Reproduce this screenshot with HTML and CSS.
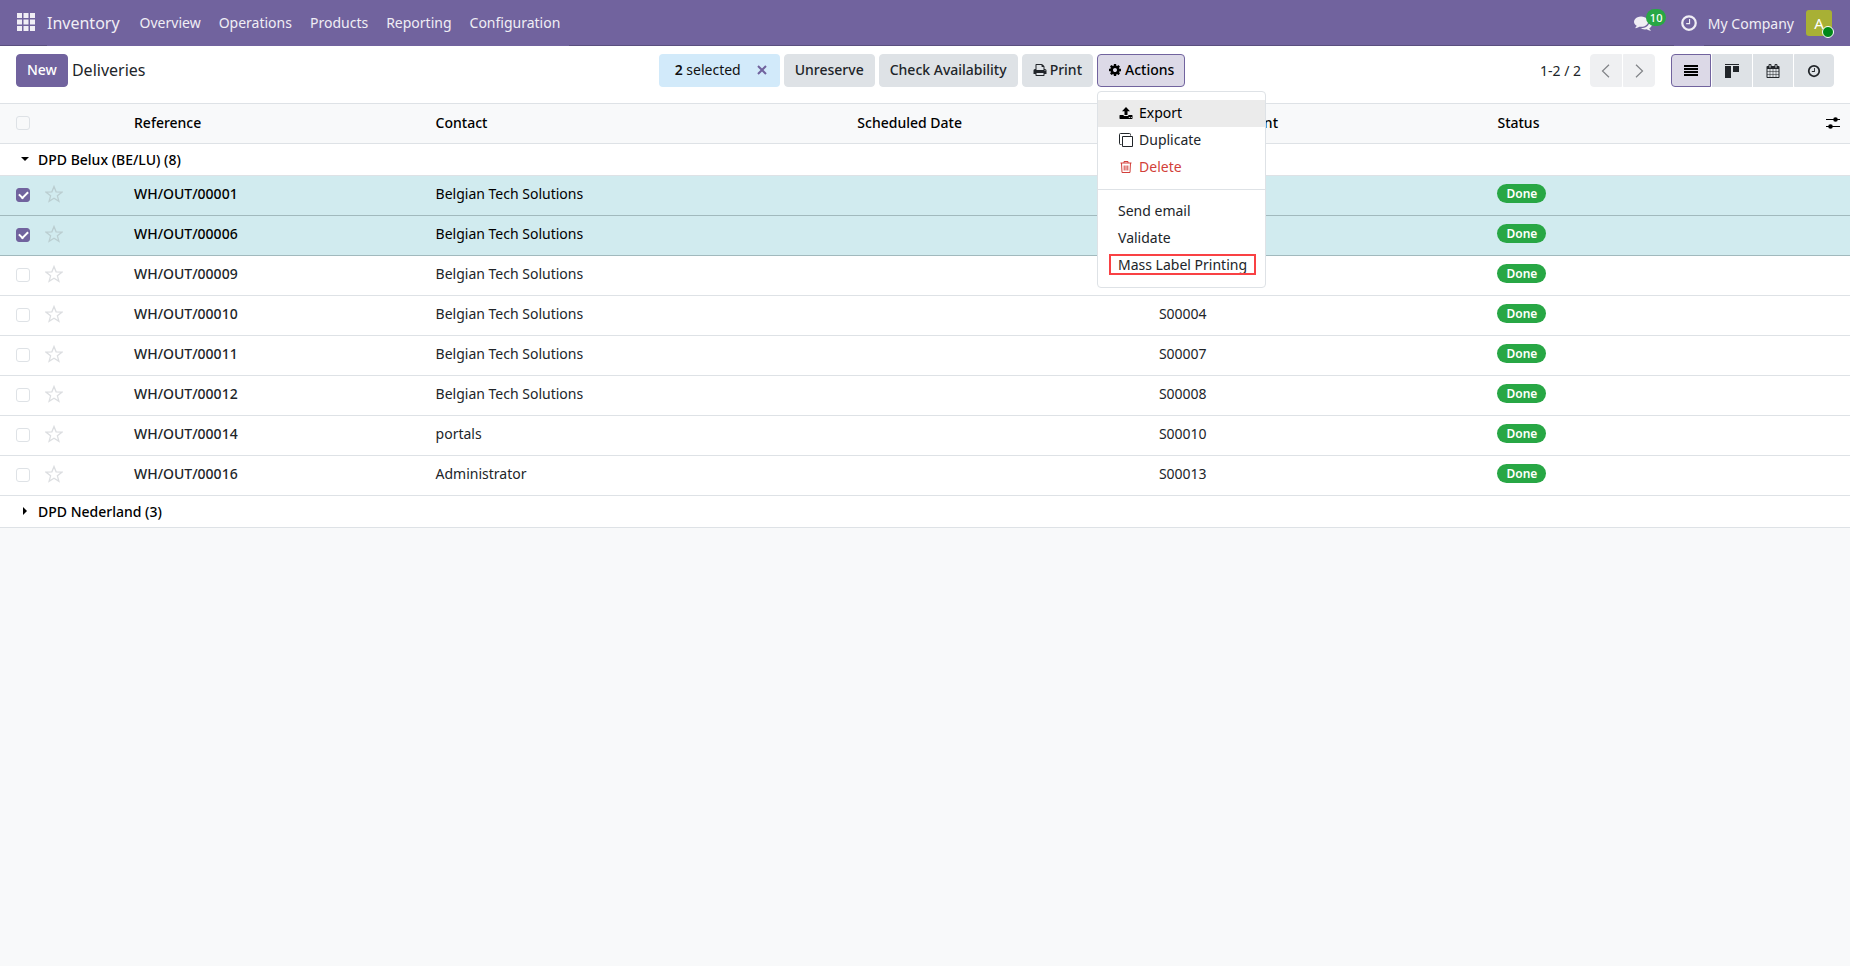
FILE: index.html
```html
<!DOCTYPE html>
<html lang="en">
<head>
<meta charset="utf-8">
<title>Deliveries - Inventory</title>
<link rel="stylesheet" href="styles.css">
</head>
<body>
<svg class="sprite" aria-hidden="true">
  <symbol id="apps" viewBox="0 0 18 18"><path d="M0 0h5v5H0zM6.500 0h5v5h-5zM13 0h5v5h-5zM0 6.500h5v5H0zM6.500 6.500h5v5h-5zM13 6.500h5v5h-5zM0 13h5v5H0zM6.500 13h5v5h-5zM13 13h5v5h-5z"/></symbol>
  <symbol id="comments" viewBox="0 0 1792 1792"><path d="M1408 768q0 139-94 257t-256.500 186.500-353.500 68.500q-86 0-176-16-124 88-278 128-36 9-86 16h-3q-11 0-20.500-8t-11.500-21q-1-3-1-6.500t.5-6.500 2-6l2.500-5 3.500-5.500 4-5 4.500-5 4-4.500q5-6 23-25t26-29.500 22.500-29 25-38.500 20.500-44q-124-72-195-177t-71-224q0-139 94-257t256.500-186.500 353.500-68.500 353.500 68.500 256.500 186.500 94 257zm384 256q0 120-71 224.500t-195 176.500q10 24 20.500 44t25 38.500 22.500 29 26 29.500 23 25q1 1 4 4.500t4.500 5 4 5 3.500 5.500l2.500 5 2 6 .5 6.500-1 6.500q-3 14-13 22t-22 7q-50-7-86-16-154-40-278-128-90 16-176 16-271 0-472-132 58 4 88 4 161 0 309-45t264-129q125-92 192-212t67-254q0-77-23-152 129 71 204 178t75 230z"/></symbol>
  <symbol id="clock" viewBox="0 0 16 16"><path d="M8 1a7 7 0 1 0 0 14A7 7 0 0 0 8 1zm0 2a5 5 0 1 1 0 10A5 5 0 0 1 8 3z"/><path d="M8 4.500h1V9H5.500V8H8z"/></symbol>
  <symbol id="cog" viewBox="0 0 1792 1792"><path d="M1152 896q0-106-75-181t-181-75-181 75-75 181 75 181 181 75 181-75 75-181zm512-109v222q0 12-8 23t-20 13l-185 28q-19 54-39 91 35 50 107 138 10 12 10 25t-9 23q-27 37-99 108t-94 71q-12 0-26-9l-138-108q-44 23-91 38-16 136-29 186-7 28-36 28h-222q-14 0-24.500-8.500t-11.500-21.500l-28-184q-49-16-90-37l-141 107q-10 9-25 9-14 0-25-11-126-114-165-168-7-10-7-23 0-12 8-23 15-21 51-66.500t54-70.500q-27-50-41-99l-183-27q-13-2-21-12.500t-8-23.500v-222q0-12 8-23t19-13l186-28q14-46 39-92-40-57-107-138-10-12-10-24 0-10 9-23 26-36 98.500-107.500t94.500-71.500q13 0 26 10l138 107q44-23 91-38 16-136 29-186 7-28 36-28h222q14 0 24.500 8.500t11.500 21.500l28 184q49 16 90 37l142-107q9-9 24-9 13 0 25 10 129 119 165 170 7 8 7 22 0 12-8 23-15 21-51 66.500t-54 70.500q26 50 41 98l183 28q13 2 21 12.500t8 23.500z"/></symbol>
  <symbol id="print" viewBox="0 0 1792 1792"><path d="M448 1536h896v-256h-896v256zm0-640h896v-384h-160q-40 0-68-28t-28-68v-160h-640v640zm1152 64q0-26-19-45t-45-19-45 19-19 45 19 45 45 19 45-19 19-45zm128 0v416q0 13-9.500 22.500t-22.500 9.500h-224v160q0 40-28 68t-68 28h-960q-40 0-68-28t-28-68v-160h-224q-13 0-22.500-9.500t-9.500-22.500v-416q0-79 56.500-135.500t135.500-56.500h64v-544q0-40 28-68t68-28h672q40 0 88 20t76 48l152 152q28 28 48 76t20 88v256h64q79 0 135.500 56.500t56.500 135.500z"/></symbol>
  <symbol id="calendar" viewBox="0 0 1792 1792"><path d="M192 1664h288v-288h-288v288zm352 0h320v-288h-320v288zm-352-352h288v-320h-288v320zm352 0h320v-320h-320v320zm-352-384h288v-288h-288v288zm736 736h320v-288h-320v288zm-384-736h320v-288h-320v288zm768 736h288v-288h-288v288zm-384-352h320v-320h-320v320zm-352-864v-288q0-13-9.500-22.500t-22.500-9.500h-64q-13 0-22.500 9.500t-9.500 22.500v288q0 13 9.500 22.500t22.500 9.500h64q13 0 22.500-9.500t9.500-22.500zm736 864h288v-320h-288v320zm-384-384h320v-288h-320v288zm384 0h288v-288h-288v288zm32-480v-288q0-13-9.500-22.500t-22.500-9.500h-64q-13 0-22.500 9.500t-9.500 22.500v288q0 13 9.500 22.500t22.500 9.500h64q13 0 22.500-9.500t9.500-22.500zm384-64v1280q0 52-38 90t-90 38h-1408q-52 0-90-38t-38-90v-1280q0-52 38-90t90-38h128v-96q0-66 47-113t113-47h64q66 0 113 47t47 113v96h384v-96q0-66 47-113t113-47h64q66 0 113 47t47 113v96h128q52 0 90 38t38 90z"/></symbol>
  <symbol id="list" viewBox="0 0 14 14"><path d="M0 1h14v2H0zM0 4h14v2H0zM0 7h14v2H0zM0 10h14v2H0z"/></symbol>
  <symbol id="kanban" viewBox="0 0 14 14"><path d="M0 0h14v1H0zM0 2h6v12H0zM8 2h6v6H8z"/></symbol>
  <symbol id="left" viewBox="0 0 14 14"><path d="M10 .8 3.500 7l6.500 6.200" fill="none" stroke="currentColor" stroke-width="1.200"/></symbol>
  <symbol id="right" viewBox="0 0 14 14"><path d="M4 .8 10.500 7 4 13.200" fill="none" stroke="currentColor" stroke-width="1.200"/></symbol>
  <symbol id="close" viewBox="0 0 10 10"><path d="m1 1 8 8M9 1 1 9" fill="none" stroke="currentColor" stroke-width="2"/></symbol>
  <symbol id="upload" viewBox="0 0 14 14"><path d="M7 1l4 4.200H8.500V9h-3V5.200H3zM1 9h3.700v1h4.600V9H13q.5 0 .5.5V12q0 1-.5 1H1q-.5 0-.5-1V9.500Q.5 9 1 9zm8.800 2v1h1v-1zm2 0v1h1v-1z"/></symbol>
  <symbol id="copy" viewBox="0 0 14 14"><path d="M3.500 3.500h10v10h-10zM2.500 11.500h-1a1 1 0 0 1-1-1v-9a1 1 0 0 1 1-1h9a1 1 0 0 1 1 1v1" fill="none" stroke="currentColor"/></symbol>
  <symbol id="trash" viewBox="0 0 14 14"><path d="M1.500 3h11M5 3V1.500h4V3M2.500 3l.5 9.500h8l.5-9.500M5.200 5.500v5M7 5.500v5M8.800 5.500v5" fill="none" stroke="currentColor"/></symbol>
  <symbol id="sliders" viewBox="0 0 14 14"><path d="M0 3h14v1H0zM0 10h14v1H0z"/><circle cx="9.500" cy="3.500" r="2.300"/><circle cx="4.500" cy="10.500" r="2.300"/></symbol>
  <symbol id="star" viewBox="0 0 18 18"><path d="m9 1.500 2.100 5.300 5.800.4-4.500 3.600 1.500 5.600L9 13.300l-4.900 3.100 1.500-5.600L1.100 7.200l5.800-.4z" fill="none" stroke="currentColor" stroke-width="1.300"/></symbol>
  <symbol id="down" viewBox="0 0 8 8"><path d="M0 2h8L4 6z"/></symbol>
  <symbol id="next" viewBox="0 0 8 8"><path d="M2 0v8l4-4z"/></symbol>
</svg>

<header class="navbar">
  <button class="apps" aria-label="Home menu"><svg class="i18"><use href="#apps"/></svg></button>
  <nav class="menu">
    <a class="brand" href="#">Inventory</a>
    <a href="#">Overview</a>
    <a href="#">Operations</a>
    <a href="#">Products</a>
    <a href="#">Reporting</a>
    <a href="#">Configuration</a>
  </nav>
  <div class="systray">
    <button class="chat" aria-label="Messages"><svg class="i18"><use href="#comments"/></svg><span class="count">10</span></button>
    <button class="activities" aria-label="Activities"><svg class="i18"><use href="#clock"/></svg></button>
    <button class="company">My Company</button>
    <button class="user" aria-label="User menu"><span class="avatar">A<span class="online"></span></span></button>
  </div>
</header>

<section class="panel">
  <div class="panel-left">
    <button class="btn primary">New</button>
    <h1 class="title">Deliveries</h1>
  </div>
  <div class="panel-actions">
    <div class="selection"><span><b>2</b> selected</span><button class="unselect" aria-label="Clear selection"><svg class="i10"><use href="#close"/></svg></button></div>
    <button class="btn">Unreserve</button>
    <button class="btn">Check Availability</button>
    <button class="btn"><svg class="i14"><use href="#print"/></svg>Print</button>
    <div class="dropdown">
      <button class="btn active" aria-expanded="true"><svg class="i14"><use href="#cog"/></svg>Actions</button>
      <div class="dropdown-menu">
        <button class="item hover"><svg class="i14"><use href="#upload"/></svg>Export</button>
        <button class="item"><svg class="i14"><use href="#copy"/></svg>Duplicate</button>
        <button class="item danger"><svg class="i14"><use href="#trash"/></svg>Delete</button>
        <hr class="divider">
        <button class="item">Send email</button>
        <button class="item">Validate</button>
        <button class="item"><span class="marked">Mass Label Printing</span></button>
      </div>
    </div>
  </div>
  <div class="panel-right">
    <span class="range">1-2 / 2</span>
    <div class="group pager">
      <button class="btn" aria-label="Previous" disabled><svg class="i14"><use href="#left"/></svg></button>
      <button class="btn" aria-label="Next" disabled><svg class="i14"><use href="#right"/></svg></button>
    </div>
    <div class="group views">
      <button class="btn active" aria-label="List"><svg class="i14"><use href="#list"/></svg></button>
      <button class="btn" aria-label="Kanban"><svg class="i14"><use href="#kanban"/></svg></button>
      <button class="btn" aria-label="Calendar"><svg class="i14"><use href="#calendar"/></svg></button>
      <button class="btn" aria-label="Activity"><svg class="i14"><use href="#clock"/></svg></button>
    </div>
  </div>
</section>

<main>
<table class="list">
  <colgroup><col class="c-check"><col class="c-star"><col class="c-ref"><col class="c-contact"><col class="c-date"><col class="c-source"><col class="c-status"><col class="c-opts"></colgroup>
  <thead>
    <tr><th class="check"><input type="checkbox" aria-label="Select all"></th><th></th><th>Reference</th><th>Contact</th><th>Scheduled Date</th><th>Source Document</th><th>Status</th><th class="opts"><button class="plain" aria-label="Optional columns"><svg class="i14"><use href="#sliders"/></svg></button></th></tr>
  </thead>
  <tbody>
    <tr class="grp"><th colspan="8"><button class="plain"><svg class="i8"><use href="#down"/></svg>DPD Belux (BE/LU) (8)</button></th></tr>
    <tr class="selected"><td class="check"><input type="checkbox" aria-label="WH/OUT/00001" checked></td><td><button class="plain star" aria-label="Priority"><svg class="i18"><use href="#star"/></svg></button></td><td class="ref">WH/OUT/00001</td><td>Belgian Tech Solutions</td><td></td><td></td><td><span class="badge">Done</span></td><td></td></tr>
    <tr class="selected"><td class="check"><input type="checkbox" aria-label="WH/OUT/00006" checked></td><td><button class="plain star" aria-label="Priority"><svg class="i18"><use href="#star"/></svg></button></td><td class="ref">WH/OUT/00006</td><td>Belgian Tech Solutions</td><td></td><td></td><td><span class="badge">Done</span></td><td></td></tr>
    <tr><td class="check"><input type="checkbox" aria-label="WH/OUT/00009"></td><td><button class="plain star" aria-label="Priority"><svg class="i18"><use href="#star"/></svg></button></td><td class="ref">WH/OUT/00009</td><td>Belgian Tech Solutions</td><td></td><td></td><td><span class="badge">Done</span></td><td></td></tr>
    <tr><td class="check"><input type="checkbox" aria-label="WH/OUT/00010"></td><td><button class="plain star" aria-label="Priority"><svg class="i18"><use href="#star"/></svg></button></td><td class="ref">WH/OUT/00010</td><td>Belgian Tech Solutions</td><td></td><td>S00004</td><td><span class="badge">Done</span></td><td></td></tr>
    <tr><td class="check"><input type="checkbox" aria-label="WH/OUT/00011"></td><td><button class="plain star" aria-label="Priority"><svg class="i18"><use href="#star"/></svg></button></td><td class="ref">WH/OUT/00011</td><td>Belgian Tech Solutions</td><td></td><td>S00007</td><td><span class="badge">Done</span></td><td></td></tr>
    <tr><td class="check"><input type="checkbox" aria-label="WH/OUT/00012"></td><td><button class="plain star" aria-label="Priority"><svg class="i18"><use href="#star"/></svg></button></td><td class="ref">WH/OUT/00012</td><td>Belgian Tech Solutions</td><td></td><td>S00008</td><td><span class="badge">Done</span></td><td></td></tr>
    <tr><td class="check"><input type="checkbox" aria-label="WH/OUT/00014"></td><td><button class="plain star" aria-label="Priority"><svg class="i18"><use href="#star"/></svg></button></td><td class="ref">WH/OUT/00014</td><td>portals</td><td></td><td>S00010</td><td><span class="badge">Done</span></td><td></td></tr>
    <tr><td class="check"><input type="checkbox" aria-label="WH/OUT/00016"></td><td><button class="plain star" aria-label="Priority"><svg class="i18"><use href="#star"/></svg></button></td><td class="ref">WH/OUT/00016</td><td>Administrator</td><td></td><td>S00013</td><td><span class="badge">Done</span></td><td></td></tr>
    <tr class="grp"><th colspan="8"><button class="plain"><svg class="i8"><use href="#next"/></svg>DPD Nederland (3)</button></th></tr>
  </tbody>
</table>
</main>
</body>
</html>
```
FILE: styles.css
```css
* { box-sizing: border-box; }

body {
  margin: 0;
  background: #f8f9fa;
  color: #212529;
  font: 14px/21px "Noto Sans", "Open Sans", sans-serif;
}

button {
  margin: 0;
  padding: 0;
  border: 0;
  background: none;
  color: inherit;
  font: inherit;
  cursor: pointer;
}

svg { fill: currentColor; display: block; flex: none; }
.sprite { position: absolute; width: 0; height: 0; }
.i8 { width: 8px; height: 8px; }
.i10 { width: 10px; height: 10px; }
.i14 { width: 14px; height: 14px; }
.i18 { width: 18px; height: 18px; }

/* Navigation bar */
.navbar {
  display: flex;
  height: 46px;
  background: #71639e;
  box-shadow: inset 0 -1px #5a4f7f;
  color: #f0eef5;
}
.apps { padding: 0 12px 2px 17px; }
.menu { display: flex; background: #71639e; }
.menu a {
  padding: 0 9px;
  color: inherit;
  line-height: 46px;
  text-decoration: none;
}
.menu .brand { padding: 0 11px 0 0; font-size: 16px; }
.systray { display: flex; margin-left: auto; }
.systray button { height: 46px; }
.chat { position: relative; width: 40px; }
.count {
  position: absolute;
  top: 9px;
  left: 12px;
  padding: 0 4px;
  border-radius: 9px;
  background: #28a745;
  color: #fff;
  font-size: 11px;
  font-weight: 500;
  line-height: 17px;
}
.activities { padding: 0 6px; background: #71639e; }
.company { padding: 0 6px 0 4px; }
.user { padding: 0 18px 0 6px; background: #71639e; }
.avatar {
  position: relative;
  display: block;
  width: 26px;
  border-radius: 3px;
  background: #a8b035;
  color: #fff;
  font-size: 15px;
  line-height: 26px;
}
.online {
  position: absolute;
  right: -2px;
  bottom: -2px;
  width: 12px;
  height: 12px;
  border: 1px solid #fff;
  border-radius: 50%;
  background: #008818;
}

/* Control panel */
.panel {
  display: flex;
  align-items: flex-start;
  padding: 8px 16px 16px;
  background: #fff;
}
.panel-left, .panel-right { display: flex; flex: 1; align-items: center; }
.panel-right { justify-content: flex-end; }
.title { margin: 0 0 0 4px; font-size: 16px; font-weight: 400; line-height: 33px; }
.panel-actions { display: flex; gap: 4px; padding-right: 6px; }
.btn {
  display: flex;
  align-items: center;
  gap: 3px;
  padding: 4px 10px 6px;
  border: 1px solid #dee2e6;
  border-radius: 4px;
  background: #dee2e6;
  color: #212529;
  font-weight: 500;
}
.primary { border-color: #71639e; background: #71639e; color: #fff; }
.btn.active { border-color: #71639e; background: #dcd9e7; color: #000; }
.selection {
  display: flex;
  align-items: center;
  gap: 16px;
  padding: 5px 13px 7px 16px;
  border-radius: 4px;
  background: #d2eafa;
  color: #111;
}
.selection b { font-weight: 600; }
.unselect { color: #71639e; }

.dropdown { position: relative; }
.dropdown-menu {
  position: absolute;
  z-index: 10;
  top: 37px;
  left: 0;
  min-width: 165px;
  padding: 8px 0;
  border: 1px solid #dee2e6;
  border-radius: 4px;
  background: #fff;
}
.item {
  display: flex;
  align-items: center;
  gap: 6px;
  width: 100%;
  padding: 2px 18px 4px 20px;
  line-height: 21px;
  white-space: nowrap;
}
.item svg { margin-left: 1px; }
.hover { background: #ebebeb; color: #000; }
.danger { color: #d23f3a; }
.divider { margin: 8px 0; border: 0; border-top: 1px solid #dee2e6; }
.marked { margin: 0 -9px; padding: 0 9px; outline: 2px solid #f94144; outline-offset: -2px; }

.range { margin-right: 9px; }
.group { display: flex; gap: 1px; }
.group .btn { justify-content: center; border-radius: 0; }
.group .btn:first-child { border-radius: 4px 0 0 4px; }
.group .btn:last-child { border-radius: 0 4px 4px 0; }
.pager { margin-right: 16px; }
.pager .btn { width: 32px; height: 33px; padding: 0; border-color: #eff0f2; background: #eff0f2; color: #808387; }
.views .btn { width: 40px; height: 33px; padding: 0; }

/* List */
.list {
  width: 100%;
  border-collapse: separate;
  border-spacing: 0;
  table-layout: fixed;
  background: #fff;
}
.c-check { width: 44px; }
.c-star { width: 82px; }
.c-ref, .c-date { width: 16.300%; }
.c-contact { width: 22.800%; }
.c-source { width: 18.300%; }
.c-opts { width: 44px; }
.list th, .list td {
  height: 40px;
  padding: 0 8px 4px;
  border-bottom: 1px solid #dee2e6;
  text-align: left;
  vertical-align: middle;
}
.list th { color: #000; font-weight: 500; }
.list thead th { height: 41px; padding: 0 8px 2px; border-top: 1px solid #dee2e6; background: #f8f9fa; }
.list .check { padding: 0 0 1px 16px; }
.list .grp th { height: 32px; padding: 0 0 1px 16px; }
.list thead .opts { padding: 0 10px 2px; }
.list .opts .plain { margin-left: auto; }
.plain { display: flex; align-items: center; gap: 9px; }
.grp .plain { padding-left: 5px; }
.star { margin-left: -7px; color: #dcdee1; }
.ref { font-weight: 500; }
.selected td { border-color: #a1b9bd; background: #d1ebef; color: #000; }
.selected .star { color: #bbced1; }

input[type="checkbox"] {
  appearance: none;
  display: grid;
  place-content: center;
  width: 14px;
  height: 14px;
  margin: 0;
  border: 1px solid #dee2e6;
  border-radius: 3px;
}
input[type="checkbox"]:checked { border-color: #71639e; background: #71639e; }
input[type="checkbox"]:checked::after {
  content: "";
  width: 7px;
  height: 4px;
  margin-bottom: 2px;
  border: solid #fff;
  border-width: 0 0 2px 2px;
  transform: rotate(-45deg);
}
.badge {
  display: block;
  width: fit-content;
  padding: 0 9px;
  border-radius: 10px;
  background: #28a745;
  color: #fff;
  font-size: 12px;
  font-weight: 600;
  line-height: 19px;
}
```
